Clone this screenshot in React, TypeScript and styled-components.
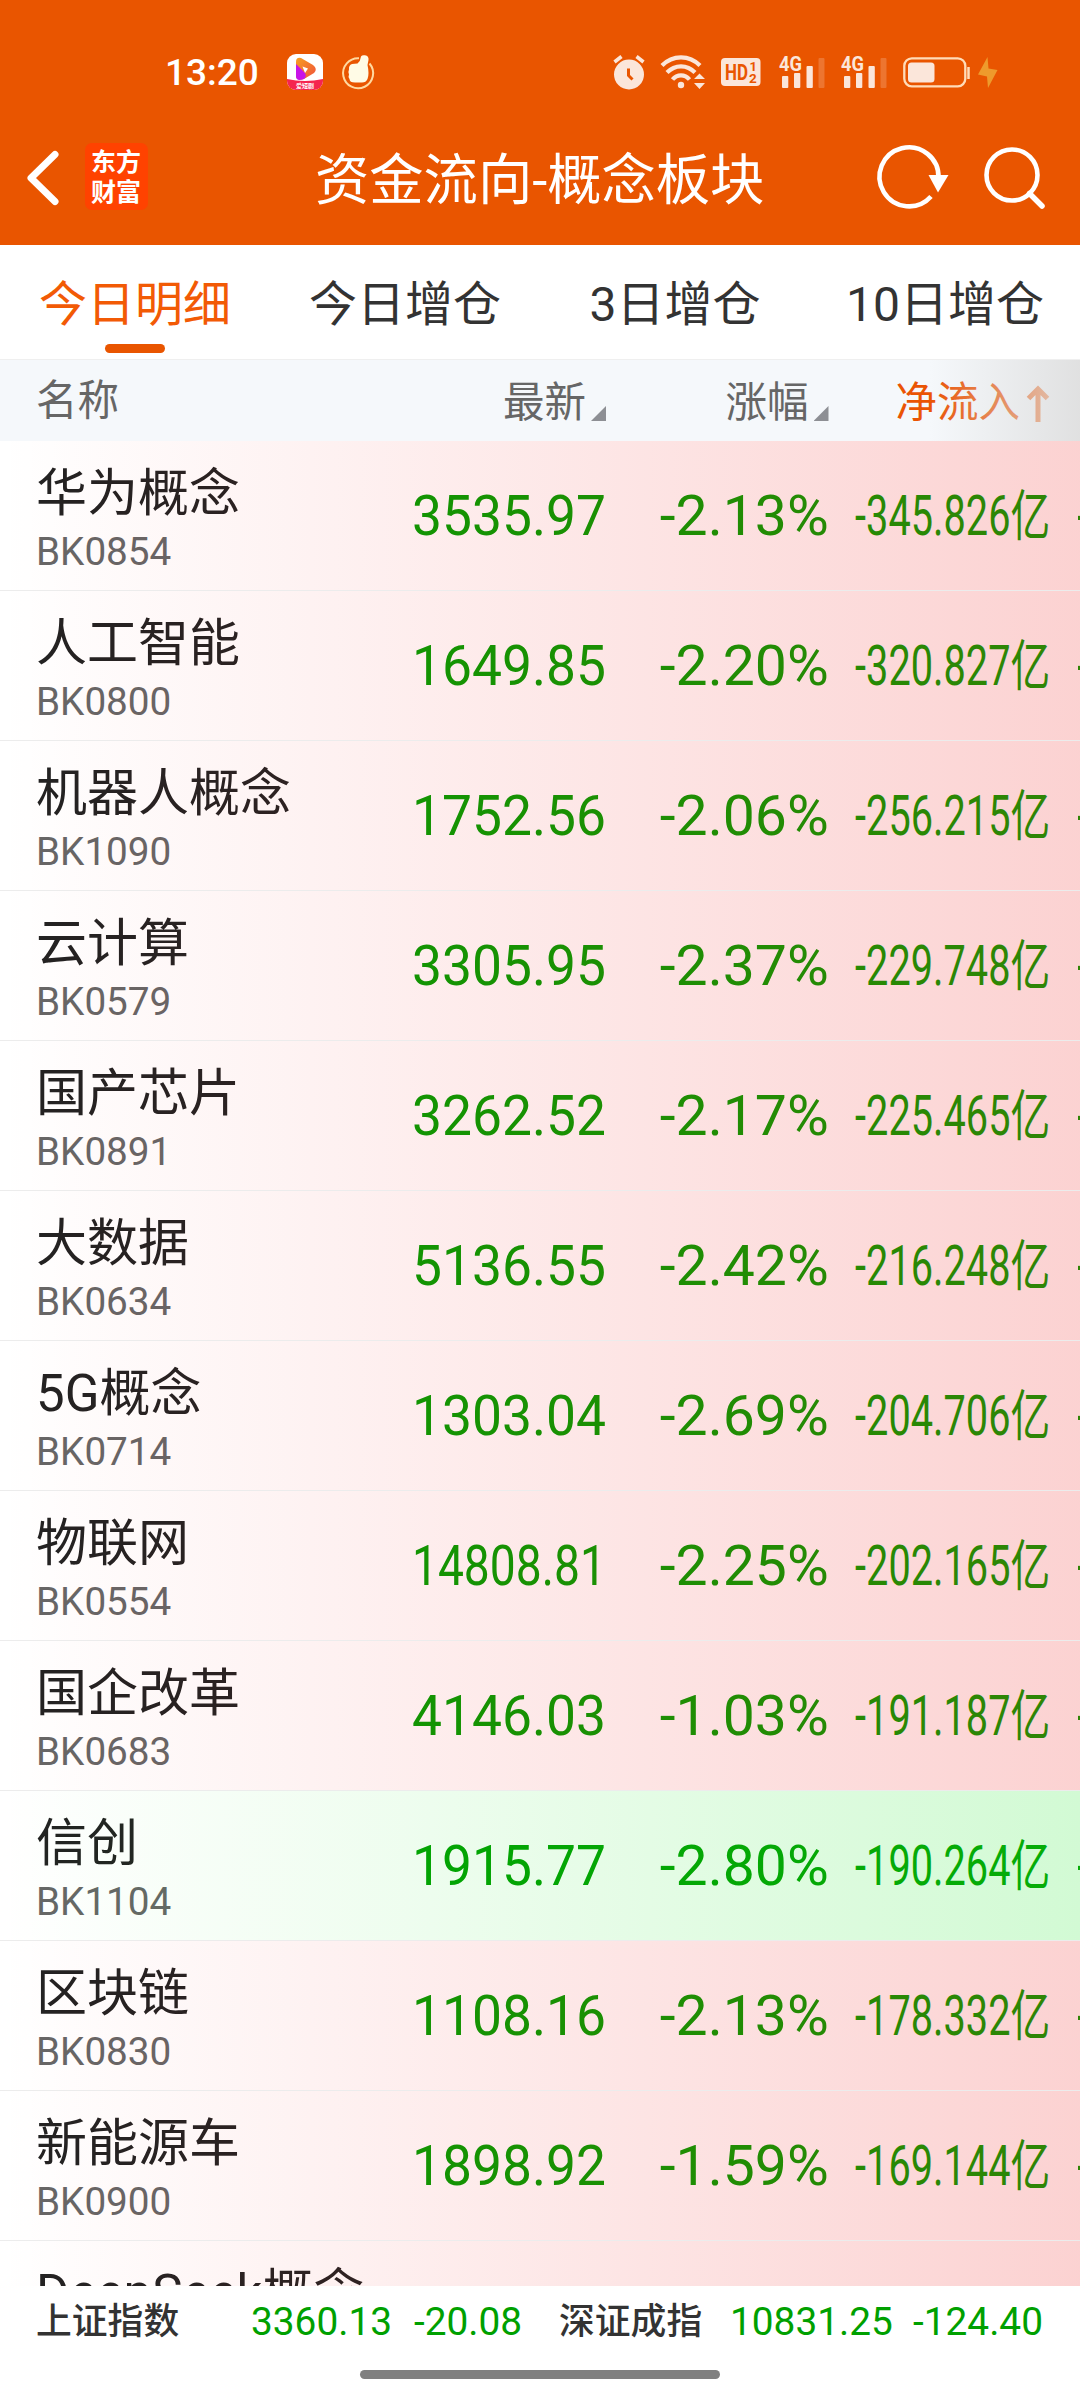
import React from "react";
import styled, { createGlobalStyle } from "styled-components";

const ORANGE = "#e95500";
const ICON = "#fbe6da";

const GlobalStyle = createGlobalStyle`
  * { box-sizing: border-box; }
  body {
    margin: 0;
    background: #fff;
    font-family: Roboto, "Noto Sans CJK SC", sans-serif;
  }
`;

const Screen = styled.div`
  width: 1080px;
  height: 2400px;
  display: flex;
  flex-direction: column;
  overflow: hidden;
  background: #fff;
`;

const Top = styled.header`
  height: 245px;
  flex: none;
  background: ${ORANGE};
  color: #fff;
`;

const StatusBar = styled.div`
  height: 110px;
  padding: 34px 81px 0 165px;
  display: flex;
  align-items: center;
`;

const Clock = styled.span`
  width: 122px;
  padding-top: 2px;
  font-size: 37px;
  font-weight: 500;
  line-height: 70px;
`;

const Glyph = styled.svg<{ $gap?: number }>`
  display: block;
  flex: none;
  overflow: visible;
  margin-left: ${(p) => p.$gap ?? 0}px;
`;

const Spacer = styled.div`
  flex: 1;
`;

const NavBar = styled.div`
  height: 135px;
  padding: 0 35px 0 24px;
  display: flex;
  align-items: center;
`;

const Logo = styled.div`
  width: 63px;
  height: 67px;
  margin: 0 0 2px 23px;
  padding: 3px 0 0 6px;
  border-radius: 7px;
  background: #ff4200;
  font-family: "Noto Sans CJK SC", sans-serif;
  font-size: 25px;
  font-weight: 700;
  line-height: 29.5px;
`;

const Title = styled.h1`
  flex: 1;
  margin: 0;
  padding: 7px 0 0 167px;
  font-size: 54.3px;
  font-weight: 400;
  line-height: 70px;
  white-space: nowrap;
`;

const Tabs = styled.nav`
  height: 115px;
  flex: none;
  display: grid;
  grid-template-columns: repeat(4, 1fr);
  border-bottom: 1px solid #efefef;
`;

const Tab = styled.div<{ $active?: boolean }>`
  display: flex;
  flex-direction: column;
  align-items: center;
  padding-top: 25px;
  font-size: 48px;
  line-height: 70px;
  color: ${(p) => (p.$active ? "#f25a05" : "#333")};
`;

const Underline = styled.i`
  width: 60px;
  height: 9px;
  margin-top: 4px;
  border-radius: 5px;
  background: ${ORANGE};
`;

const columns = "230px 340px 222.5px 221.5px 40px";

const HeadRow = styled.div`
  position: relative;
  height: 81px;
  flex: none;
  padding-left: 36px;
  display: grid;
  grid-template-columns: ${columns};
  background: #f5f8fb;
  font-size: 41.5px;
  line-height: 80px;
  color: #666;
  overflow: hidden;

  &::after {
    content: "";
    position: absolute;
    inset: 0 0 0 auto;
    width: 150px;
    background: linear-gradient(90deg, rgba(222, 222, 222, 0), rgba(222, 222, 222, 0.9));
  }
`;

const HeadCell = styled.div<{ $active?: boolean }>`
  display: flex;
  justify-content: flex-end;
  padding-top: 3px;
  color: ${(p) => (p.$active ? "#ea5404" : "inherit")};
`;

const HeadName = styled.div`
  padding-top: 1px;
`;

const Corner = styled.i`
  width: 15px;
  height: 15px;
  margin: 43px 0 0 5px;
  background: #8d8f94;
  clip-path: polygon(100% 0, 100% 100%, 0 100%);
`;

const List = styled.main`
  height: 1845px;
  flex: none;
  overflow: hidden;
`;

const Row = styled.div<{ $up?: boolean }>`
  position: relative;
  height: 150px;
  padding-left: 36px;
  display: grid;
  grid-template-columns: ${columns};
  border-bottom: 1px solid #ececec;
  overflow: hidden;

  &::after {
    content: "";
    position: absolute;
    inset: 0;
    background: linear-gradient(
      90deg,
      ${(p) => (p.$up ? "rgba(30,230,40,0), rgba(30,230,40,.2)" : "rgba(238,30,28,0), rgba(238,30,28,.2)")}
    );
  }
`;

const NameCell = styled.div`
  padding-top: 23px;
  white-space: nowrap;
`;

const Name = styled.div`
  font-size: 51px;
  line-height: 60px;
  color: #222;
`;

const Code = styled.div`
  font-size: 38.7px;
  line-height: 44px;
  margin-top: 6px;
  color: #666;
`;

const Num = styled.div<{ $scale: number }>`
  justify-self: end;
  font-size: 55px;
  line-height: 150px;
  white-space: nowrap;
  color: #009e00;
  transform: scaleX(${(p) => p.$scale});
  transform-origin: right center;
`;

const NextColumn = styled.div`
  padding-left: 27px;
  font-size: 55px;
  line-height: 150px;
  color: #009e00;
`;

const Footer = styled.footer`
  flex: 1;
  display: flex;
  flex-direction: column;
  align-items: center;
  background: #fff;
`;

const Indices = styled.div`
  width: 100%;
  height: 71px;
  padding: 1px 34px 0 36px;
  display: grid;
  grid-template-columns: 215px 163px 145px 171px 183px 1fr;
  font-size: 38.8px;
  line-height: 70px;
  color: #00a000;
  white-space: nowrap;
`;

const IndexName = styled.span`
  font-size: 35.8px;
  font-weight: 500;
  color: #333;
`;

const HomeBar = styled.div`
  width: 360px;
  height: 9px;
  margin-top: 13px;
  border-radius: 5px;
  background: #808080;
`;

const VideoAppIcon = () => (
  <Glyph width="36" height="36" viewBox="0 0 36 36">
    <defs>
      <clipPath id="appShape"><rect width="36" height="36" rx="9" /></clipPath>
      <linearGradient id="playTop" x1="0" y1="0" x2="1" y2="1">
        <stop offset="0" stopColor="#f7a020" />
        <stop offset="1" stopColor="#f0503c" />
      </linearGradient>
    </defs>
    <g clipPath="url(#appShape)">
      <rect width="36" height="36" fill="#fff" />
      <path d="M0 25Q18 29 36 25V36H0Z" fill="#f5254f" />
      <path d="M9 8Q9 3 14 4L26 11Q31 15 27 19L17 25Q9 27 9 22Z" fill="url(#playTop)" />
      <path d="M9 10L18 19Q20 22 17 25Q9 28 9 22Z" fill="#c812e8" />
      <path d="M15.5 12.5L21 14.5L18 19Z" fill="#fff" />
    </g>
    <text x="18" y="34" fontSize="6" fontWeight="700" textAnchor="middle" fill="#fff">爱短剧</text>
  </Glyph>
);

const ThumbIcon = () => (
  <Glyph $gap={18} width="34" height="36" viewBox="0 0 34 36">
    <path d="M18 4.3A15 15 0 1 0 28.5 9.5" fill="none" stroke="#ffd9a0" strokeWidth="2" />
    <path d="M11 10L16.500 9.500Q19.500 7 20 2.500Q21 .8 24 1.300Q28 2 27.500 6L26.500 11Q28.500 20 26.500 25Q25 28.500 21 28.500H14Q8.500 28.500 8.500 25Q6.800 23 8 20.500Q6.800 18 8 15.500Q7.500 11 11 10Z" fill="#fffbe6" />
  </Glyph>
);

const AlarmIcon = () => (
  <Glyph width="34" height="36" viewBox="0 0 34 36">
    <circle cx="17" cy="20.500" r="15" fill={ICON} />
    <path d="M2.500 8L9.500 2.500M31.500 8L24.500 2.500" stroke={ICON} strokeWidth="3.600" />
    <path d="M16.500 14.500V21.500L20.500 25.500" fill="none" stroke={ORANGE} strokeWidth="3" />
  </Glyph>
);

const WifiIcon = () => (
  <Glyph $gap={14} width="46" height="36" viewBox="0 0 46 36">
    <g fill="none" stroke={ICON} strokeWidth="4.200">
      <path d="M2 11.500Q10 3.300 21 3.300T40 11.500" />
      <path d="M7 18.500Q13 12.300 21 12.300T35 18.500" />
      <path d="M12.500 25.500Q16 21.300 21 21.300T29.500 25.500" />
    </g>
    <circle cx="21" cy="31" r="3.200" fill={ICON} />
    <path d="M34 25L39.500 19.500L45 25ZM34 29H45L39.500 35Z" fill={ICON} />
  </Glyph>
);

const HdIcon = () => (
  <Glyph $gap={15} width="40" height="30" viewBox="0 0 40 30">
    <rect y="1" width="39.500" height="28" rx="4" fill={ICON} />
    <g fill={ORANGE} fontWeight="700">
      <text x="4" y="22.800" fontSize="22.500" textLength="23" lengthAdjust="spacingAndGlyphs">HD</text>
      <text x="28.500" y="14" fontSize="13">1</text>
      <text x="28" y="25.500" fontSize="13.500">2</text>
    </g>
  </Glyph>
);

const SignalIcon = ({ gap }: { gap: number }) => (
  <Glyph $gap={gap} width="47" height="36" viewBox="0 0 47 36">
    <text x="0" y="17" fontSize="21" fontWeight="700" fill={ICON} textLength="23" lengthAdjust="spacingAndGlyphs">4G</text>
    <g fill={ICON}>
      <rect x="3" y="22" width="6.300" height="12" rx="1" />
      <rect x="15" y="19" width="6.300" height="15" rx="1" />
      <rect x="27.500" y="12" width="6.300" height="22" rx="1" />
      <rect x="39.500" y="4" width="6" height="30" rx="1" opacity=".22" />
    </g>
  </Glyph>
);

const BatteryIcon = () => (
  <Glyph $gap={15} width="96" height="36" viewBox="0 0 96 36">
    <rect x="1.300" y="4.300" width="61" height="28" rx="7.500" fill="none" stroke="#ffdcb8" strokeWidth="2.300" />
    <rect x="5" y="8.500" width="26.500" height="20" rx="3.500" fill={ICON} />
    <path d="M65.500 13V25" stroke="#ffdcb8" strokeWidth="2.500" />
    <path d="M84.500 3L75 20.500L84 22.500L85 34L94.500 16L85.500 14.500Z" fill="#ee9a2c" />
  </Glyph>
);

const BackIcon = () => (
  <Glyph width="38" height="62" viewBox="0 0 38 62">
    <path d="M31 7.500L7 31L31 54.500" fill="none" stroke="#fff" strokeWidth="7" strokeLinecap="round" strokeLinejoin="round" />
  </Glyph>
);

const RefreshIcon = () => (
  <Glyph width="76" height="70" viewBox="0 0 76 70">
    <path d="M62.500 35A29.500 29.500 0 1 0 55 53.500" fill="none" stroke="#fff" strokeWidth="4.600" />
    <path d="M52.500 32H72.500L62 49.500Z" fill="#fff" />
  </Glyph>
);

const SearchIcon = () => (
  <Glyph $gap={27} width="66" height="66" viewBox="0 0 66 66">
    <circle cx="33" cy="30" r="25.500" fill="none" stroke="#fff" strokeWidth="4.600" />
    <path d="M50.500 48.500L63 61" stroke="#fff" strokeWidth="5.500" strokeLinecap="round" />
  </Glyph>
);

const SortArrow = () => (
  <Glyph $gap={6} width="24" height="82" viewBox="0 0 24 82">
    <path d="M12 59V27M2.500 35.500L12 26L21.500 35.500" fill="none" stroke="#ec5808" strokeWidth="5" />
  </Glyph>
);

type Board = { name: string; code: string; last: string; change: string; flow: string; up?: boolean };

const boards: Board[] = [
  { name: "华为概念", code: "BK0854", last: "3535.97", change: "-2.13%", flow: "-345.826亿" },
  { name: "人工智能", code: "BK0800", last: "1649.85", change: "-2.20%", flow: "-320.827亿" },
  { name: "机器人概念", code: "BK1090", last: "1752.56", change: "-2.06%", flow: "-256.215亿" },
  { name: "云计算", code: "BK0579", last: "3305.95", change: "-2.37%", flow: "-229.748亿" },
  { name: "国产芯片", code: "BK0891", last: "3262.52", change: "-2.17%", flow: "-225.465亿" },
  { name: "大数据", code: "BK0634", last: "5136.55", change: "-2.42%", flow: "-216.248亿" },
  { name: "5G概念", code: "BK0714", last: "1303.04", change: "-2.69%", flow: "-204.706亿" },
  { name: "物联网", code: "BK0554", last: "14808.81", change: "-2.25%", flow: "-202.165亿" },
  { name: "国企改革", code: "BK0683", last: "4146.03", change: "-1.03%", flow: "-191.187亿" },
  { name: "信创", code: "BK1104", last: "1915.77", change: "-2.80%", flow: "-190.264亿", up: true },
  { name: "区块链", code: "BK0830", last: "1108.16", change: "-2.13%", flow: "-178.332亿" },
  { name: "新能源车", code: "BK0900", last: "1898.92", change: "-1.59%", flow: "-169.144亿" },
];

const BoardRow = ({ b }: { b: Board }) => (
  <Row $up={b.up}>
    <NameCell>
      <Name>{b.name}</Name>
      <Code>{b.code}</Code>
    </NameCell>
    <Num $scale={b.last.length > 7 ? 0.84 : 0.97}>{b.last}</Num>
    <Num $scale={1.038}>{b.change}</Num>
    <Num $scale={0.722}>{b.flow}</Num>
    <NextColumn>-</NextColumn>
  </Row>
);

export default function App() {
  return (
    <>
      <GlobalStyle />
      <Screen>
        <Top>
          <StatusBar>
            <Clock>13:20</Clock>
            <VideoAppIcon />
            <ThumbIcon />
            <Spacer />
            <AlarmIcon />
            <WifiIcon />
            <HdIcon />
            <SignalIcon gap={18} />
            <SignalIcon gap={15} />
            <BatteryIcon />
          </StatusBar>
          <NavBar>
            <BackIcon />
            <Logo>
              东方
              <br />
              财富
            </Logo>
            <Title>资金流向-概念板块</Title>
            <RefreshIcon />
            <SearchIcon />
          </NavBar>
        </Top>
        <Tabs>
          <Tab $active>
            今日明细
            <Underline />
          </Tab>
          <Tab>今日增仓</Tab>
          <Tab>3日增仓</Tab>
          <Tab>10日增仓</Tab>
        </Tabs>
        <HeadRow>
          <HeadName>名称</HeadName>
          <HeadCell>最新<Corner /></HeadCell>
          <HeadCell>涨幅<Corner /></HeadCell>
          <HeadCell $active>净流入<SortArrow /></HeadCell>
        </HeadRow>
        <List>
          {boards.map((b) => (
            <BoardRow key={b.code} b={b} />
          ))}
          <Row>
            <NameCell>
              <Name>DeepSeek概念</Name>
            </NameCell>
          </Row>
        </List>
        <Footer>
          <Indices>
            <IndexName>上证指数</IndexName>
            <span>3360.13</span>
            <span>-20.08</span>
            <IndexName>深证成指</IndexName>
            <span>10831.25</span>
            <span>-124.40</span>
          </Indices>
          <HomeBar />
        </Footer>
      </Screen>
    </>
  );
}
